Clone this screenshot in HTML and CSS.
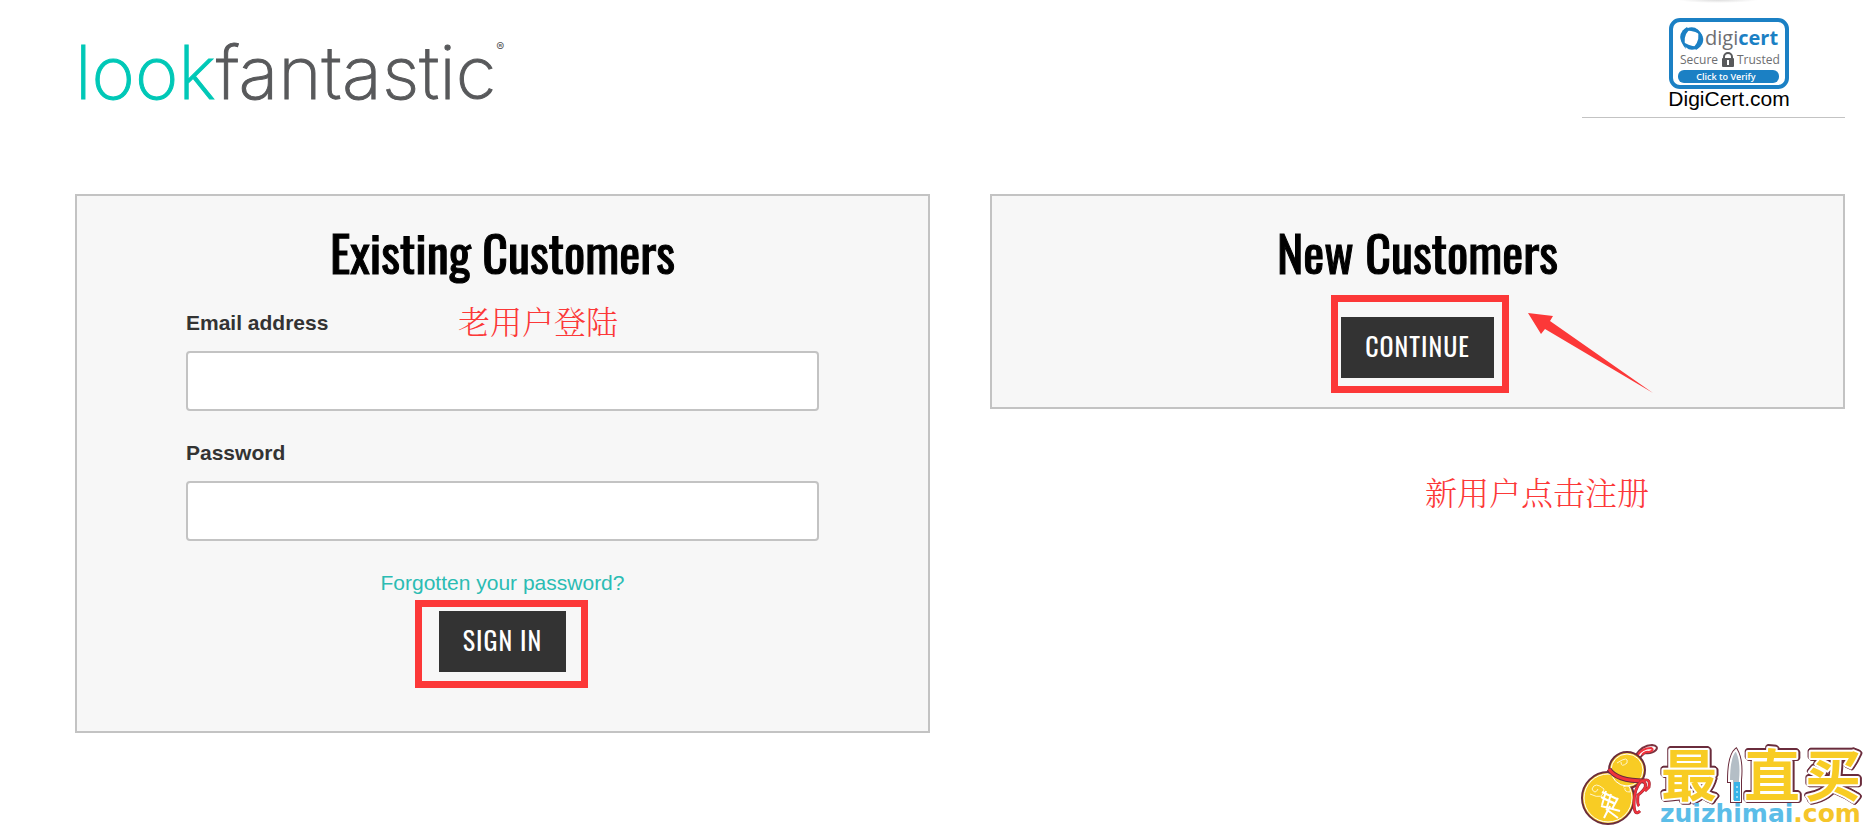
FILE: index.html
```html
<!DOCTYPE html>
<html lang="en">
<head>
<meta charset="utf-8">
<title>lookfantastic - Login</title>
<link rel="stylesheet" href="styles.css">
</head>
<body>
<header class="header">
  <a class="logo" href="#"><span class="logo-look">look</span>fantastic<sup class="logo-mark">®</sup></a>
  <div class="trust">
    <a class="trust-badge" href="#" aria-label="DigiCert Secure Trusted">
      <svg width="120" height="72" viewBox="0 0 120 72">
        <rect x="2" y="2" width="116" height="67" rx="9" fill="#fff" stroke="#1b80c4" stroke-width="4"/>
        <g fill="#1b80c4">
          <path d="M18 9Q5 17 17 31Q13 19 20 12Z"/>
          <path d="M12 22Q19 38 32 28Q21 30 12 22Z"/>
          <path d="M27 32Q41 23 28 11Q32 21 25 29Z"/>
          <path d="M34 19Q27 3 13 13Q25 11 34 19Z"/>
        </g>
        <text x="36" y="27" class="badge-name">digi<tspan class="badge-cert">cert</tspan></text>
        <text x="11" y="46" class="badge-small">Secure</text>
        <text x="68" y="46" class="badge-small">Trusted</text>
        <path d="M55 41v-2a4 4 0 0 1 8 0v2" fill="none" stroke="#58595b" stroke-width="2"/>
        <rect x="53" y="40" width="12" height="9" rx="1" fill="#58595b"/>
        <path d="M59 42v5" stroke="#fff" stroke-width="2"/>
        <rect x="9" y="52" width="101" height="13" rx="6" fill="#1b80c4"/>
        <text x="57" y="62" class="badge-verify">Click to Verify</text>
      </svg>
    </a>
    <a class="trust-link" href="#">DigiCert.com</a>
  </div>
  <span class="top-shade"></span>
</header>

<main class="columns">
  <section class="panel panel-existing">
    <h2 class="panel-title">Existing Customers</h2>
    <form class="form">
      <label class="label" for="email">Email address</label>
      <input class="input" id="email" type="email">
      <label class="label" for="password">Password</label>
      <input class="input" id="password" type="password">
      <a class="forgot" href="#">Forgotten your password?</a>
      <div class="action">
        <button class="button" type="button">SIGN IN</button>
        <span class="frame frame-signin"></span>
      </div>
    </form>
    <span class="note note-existing" lang="zh">老用户登陆</span>
  </section>
  <section class="panel panel-new">
    <h2 class="panel-title">New Customers</h2>
    <div class="action">
      <button class="button" type="button">CONTINUE</button>
      <span class="frame frame-continue"></span>
      <svg class="arrow" width="126" height="82" viewBox="0 0 126 82">
        <path d="M0 0L25 3L22 8L125 80L17 16L13 21Z" fill="#fc3838"/>
      </svg>
    </div>
    <span class="note note-new" lang="zh">新用户点击注册</span>
  </section>
</main>

<svg class="watermark" width="288" height="82" viewBox="0 0 288 82" role="img" aria-label="最值买 zuizhimai.com">
  <path d="M55 12Q62 1 72 1Q79 2 76 6Q72 10 65 9Q62 11 59 15" fill="#fff" stroke="#7b3340" stroke-width="2"/>
  <path d="M57 12Q62 4 71 4Q75 6 69 8Q65 7 62 11" fill="none" stroke="#f0323c" stroke-width="2"/>
  <circle cx="28" cy="54" r="26" fill="#f8cc24" stroke="#6a2c3c" stroke-width="2"/>
  <circle cx="47" cy="26" r="18" fill="#f8cc24" stroke="#6a2c3c" stroke-width="2"/>
  <circle cx="28" cy="54" r="24" fill="#f8cc24" stroke="#fff"/>
  <circle cx="47" cy="26" r="16" fill="#f8cc24" stroke="#fff"/>
  <path d="M37 19Q49 11 47 19Q41 24 41 18M10 50Q24 57 24 45Q15 37 12 45Q15 51 18 45M43 43Q52 39 50 48Q44 48 45 44" fill="none" stroke="#fff5c8" stroke-width="1"/>
  <path d="M29 25Q36 37 65 37" fill="none" stroke="#6a2c3c" stroke-width="5"/>
  <path d="M29 25Q36 37 65 37" fill="none" stroke="#f0323c" stroke-width="3"/>
  <path d="M61 37Q54 45 54 59T60 67M63 37Q70 42 58 51Q57 60 59 62M60 38Q71 32 69 43L65 47" fill="none" stroke="#a02c38" stroke-width="3"/>
  <path d="M61 37Q54 45 54 59T60 67M63 37Q70 42 58 51Q57 60 59 62M60 38Q71 32 69 43L65 47" fill="none" stroke="#f0323c" stroke-width="2"/>
  <path d="M22 48l15 7M21 53l14 7M26 47l-4 14M31 50l-4 13M38 54l-6 11M21 62l19 5M30 62l-6 12M26 65l12 9M27 56l7 3" fill="none" stroke="#fff" stroke-width="2"/>
  <g class="brand"><text x="81" y="52">最</text><text x="164" y="52">直</text><text x="225" y="52">买</text></g>
  <path d="M156 6Q149 12 149 37H152V57H160V36Q162 16 156 6Z" fill="#b4bec6" stroke="#6a2c3c" stroke-width="4"/>
  <path d="M156 6Q149 12 149 37H152V57H160V36Q162 16 156 6Z" fill="#b4bec6" stroke="#fff" stroke-width="2"/>
  <rect x="154" y="38" width="6" height="19" fill="#38b4e8"/>
  <path d="M157 42v12" stroke="#fff" stroke-dasharray="2 3"/>
  <text x="80" y="78" class="domain">zuizhimai<tspan class="domain-com">.com</tspan></text>
</svg>
</body>
</html>
```
FILE: styles.css
```css
* { box-sizing: border-box; }

body {
  margin: 0;
  min-height: 100vh;
  position: relative;
  background: #fff;
  color: #333;
  font-family: "Liberation Sans", Arial, sans-serif;
  font-size: 21px;
  line-height: 24px;
}

.header {
  position: relative;
  display: flex;
  justify-content: space-between;
  align-items: flex-start;
  padding: 18px 23px 0 75px;
}
.top-shade {
  position: absolute;
  top: 0;
  right: 110px;
  width: 80px;
  height: 3px;
  background: radial-gradient(ellipse at top, #ddd, #fff 70%);
}

.logo {
  display: flex;
  align-items: flex-start;
  padding-top: 9px;
  color: #58595b;
  font-family: Inter, sans-serif;
  font-size: 74px;
  font-weight: 200;
  line-height: 90px;
  text-decoration: none;
  -webkit-text-stroke: 1px currentColor;
}
.logo-look { color: #00c8b7; }
.logo-mark {
  font-size: 12px;
  font-weight: 400;
  line-height: 40px;
  -webkit-text-stroke: 0;
}

.trust {
  display: flex;
  flex-direction: column;
  align-items: center;
  width: 263px;
  padding: 0 0 9px 31px;
  border-bottom: 1px solid #c3c3c3;
}
.trust-badge { display: flex; }
.trust-link {
  color: #000;
  font-size: 21px;
  line-height: 18px;
  text-decoration: none;
}
.badge-name { font: 20px "Open Sans", sans-serif; fill: #6d6e71; }
.badge-cert { font-weight: 700; fill: #1b80c4; }
.badge-small { font: 12px "Open Sans", sans-serif; fill: #6d6e71; }
.badge-verify { font: 600 9px "Open Sans", sans-serif; fill: #fff; text-anchor: middle; }

.columns {
  display: grid;
  grid-template-columns: 1fr 1fr;
  gap: 60px;
  align-items: start;
  padding: 76px 23px 93px 75px;
}

.panel {
  position: relative;
  padding: 25px 109px 29px;
  border: 2px solid #c3c3c3;
  background: #f7f7f7;
  text-align: center;
}
.panel-existing { padding-bottom: 59px; }
.panel-new .panel-title { margin-bottom: 36px; }

.panel-title {
  margin: 0 0 30px;
  color: #000;
  font-family: Oswald, sans-serif;
  font-size: 50px;
  font-weight: 400;
  line-height: 60px;
  -webkit-text-stroke: 1px #000;
}

.form { display: flex; flex-direction: column; }
.label {
  margin-bottom: 16px;
  font-weight: 700;
  text-align: left;
}
.input {
  width: 100%;
  height: 60px;
  margin-bottom: 30px;
  padding: 0 16px;
  border: 2px solid #c3c3c3;
  border-radius: 4px;
  background: #fff;
  font: inherit;
}
.forgot {
  align-self: center;
  margin-bottom: 16px;
  color: #2bbcb3;
  text-decoration: none;
}

.action {
  position: relative;
  align-self: center;
  width: max-content;
  margin: 0 auto;
}
.button {
  display: block;
  padding: 0 24px 4px;
  border: 0;
  background: #333;
  color: #fff;
  font-family: Oswald, sans-serif;
  font-size: 26px;
  letter-spacing: 1px;
  line-height: 57px;
}

.frame { position: absolute; border: 7px solid #fc3838; pointer-events: none; }
.frame-signin { inset: -11px -22px -16px -24px; }
.frame-continue { inset: -22px -15px -15px -10px; }
.arrow { position: absolute; left: 187px; top: -4px; }

.note {
  position: absolute;
  color: #fc3838;
  font-family: "Noto Serif CJK SC", "Noto Sans CJK SC", serif;
  font-size: 32px;
  font-weight: 300;
  line-height: 40px;
  white-space: nowrap;
}
.note-existing { left: 381px; top: 104px; }
.note-new { left: 433px; top: 275px; }

.watermark { position: absolute; right: 0; bottom: 0; overflow: visible; }
.brand {
  font: 700 56px "Noto Sans CJK SC", sans-serif;
  fill: #f8cc24;
  stroke: #fff;
  stroke-width: 4px;
  stroke-linejoin: round;
  paint-order: stroke;
  filter: drop-shadow(1px 1px 0 #6a2c3c) drop-shadow(-1px -1px 0 #6a2c3c) drop-shadow(1px -1px 0 #6a2c3c);
}
.domain { font: 700 25px "DejaVu Sans", sans-serif; fill: #5bbde8; }
.domain-com { fill: #f5c52a; }
```
